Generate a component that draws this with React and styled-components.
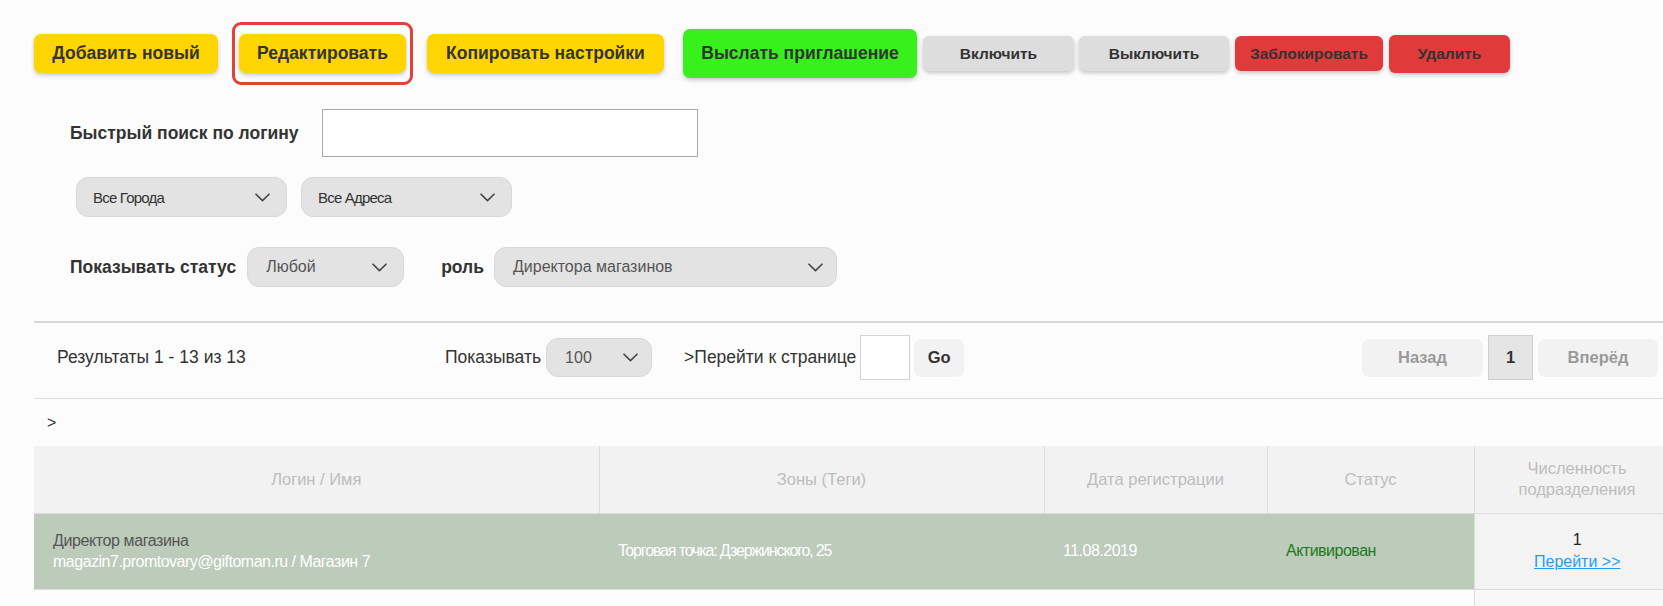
import React from 'react';
import styled, { createGlobalStyle } from 'styled-components';

const Global = createGlobalStyle`
  html, body { margin: 0; padding: 0; background: #fcfcfc; overflow: hidden; }
  body { font-family: "Liberation Sans", Arial, sans-serif; color: #333; }
  * { box-sizing: border-box; }
`;

const Page = styled.div`
  width: 1680px;
  padding: 22px 0 0 34px;
`;

const Toolbar = styled.div`
  display: flex;
  align-items: center;
  height: 63px;
`;

const tones = {
  yellow: '#ffd500',
  green: '#38f01c',
  gray: '#dddddd',
  red: '#e03a3b',
};

const ActionButton = styled.button`
  flex: 0 0 auto;
  width: ${(p) => p.$w}px;
  height: ${(p) => p.$h}px;
  margin-left: ${(p) => p.$gap || 0}px;
  padding: 0;
  border: none;
  border-radius: ${(p) => (p.$big ? 7 : 6)}px;
  background: ${(p) => tones[p.$tone]};
  color: #333;
  font-family: inherit;
  font-weight: bold;
  font-size: ${(p) => (p.$big ? '17.5px' : '15.5px')};
  box-shadow: 0 2px 4px rgba(0, 0, 0, 0.22);
  cursor: pointer;
`;

const Highlight = styled.div`
  display: flex;
  margin-left: 14px;
  padding: 9px 4px;
  border: 3px solid #e3403a;
  border-radius: 9px;
`;

const SearchRow = styled.div`
  display: flex;
  align-items: center;
  gap: 23px;
  margin-top: 24px;
  padding-left: 36px;
`;

const FieldLabel = styled.span`
  font-weight: bold;
  font-size: 17.5px;
  color: #333;
  margin-left: ${(p) => p.$gap || 0}px;
`;

const SearchInput = styled.input`
  width: 376px;
  height: 48px;
  border: 1px solid #a8a8a8;
  background: #fff;
  outline: none;
`;

const FilterRow = styled.div`
  display: flex;
  align-items: center;
  gap: 14px;
  margin-top: 20px;
  padding-left: 42px;
`;

const StatusRow = styled.div`
  display: flex;
  align-items: center;
  margin-top: 30px;
  padding-left: 36px;
`;

const SelectBox = styled.div`
  display: flex;
  align-items: center;
  justify-content: space-between;
  flex: 0 0 auto;
  width: ${(p) => p.$w}px;
  height: ${(p) => p.$h || 40}px;
  margin-left: ${(p) => p.$gap || 0}px;
  padding: 0 ${(p) => p.$pr || 16}px 0 ${(p) => p.$pl || 16}px;
  background: #e3e3e3;
  border: 1px solid #d8d8d8;
  border-radius: 12px;
`;

const SelectText = styled.span`
  font-size: ${(p) => (p.$condensed ? '15px' : '16px')};
  letter-spacing: ${(p) => (p.$condensed ? '-0.8px' : '0')};
  color: ${(p) => (p.$condensed ? '#333' : '#555')};
`;

const Chevron = () => (
  <svg width="15" height="9" viewBox="0 0 15 9" fill="none">
    <path d="M1 1.2 L7.5 7.6 L14 1.2" stroke="#444" strokeWidth="1.6" strokeLinecap="round" strokeLinejoin="round" />
  </svg>
);

const Select = ({ children, condensed, ...rest }) => (
  <SelectBox {...rest}>
    <SelectText $condensed={condensed}>{children}</SelectText>
    <Chevron />
  </SelectBox>
);

const Divider = styled.div`
  margin-top: 34px;
  height: 2px;
  background: #d8d8d8;
`;

const PagerBar = styled.div`
  display: flex;
  align-items: center;
  height: 76px;
  padding: 0 22px 6px 23px;
  border-bottom: 1px solid #dcdcdc;
  font-size: 17.5px;
  color: #333;
`;

const Results = styled.span`
  flex: 0 0 388px;
`;

const PagerText = styled.span`
  margin-left: ${(p) => p.$gap || 0}px;
`;

const PageInput = styled.input`
  width: 50px;
  height: 45px;
  margin-left: 4px;
  border: 1px solid #d4d4d4;
  background: #fff;
  outline: none;
`;

const PagerButton = styled.button`
  flex: 0 0 auto;
  width: ${(p) => p.$w}px;
  height: ${(p) => (p.$current ? 45 : 38)}px;
  margin-left: ${(p) => p.$gap || 0}px;
  padding: 0;
  border: ${(p) => (p.$current ? '1px solid #cfcfcf' : 'none')};
  border-radius: ${(p) => (p.$current ? 0 : 7)}px;
  background: ${(p) => (p.$current ? '#e4e4e4' : '#f2f2f2')};
  color: ${(p) => (p.$muted ? '#9a9a9a' : '#333')};
  font-family: inherit;
  font-weight: bold;
  font-size: 16.5px;
`;

const Spacer = styled.div`
  flex: 1;
`;

const Crumb = styled.div`
  display: flex;
  align-items: center;
  height: 47px;
  padding-left: 13px;
  font-size: 16px;
  color: #333;
`;

const Table = styled.table`
  width: 1646px;
  border-collapse: collapse;
  table-layout: fixed;
`;

const HeadCell = styled.th`
  height: 67px;
  padding: 0 8px;
  background: #f2f2f2;
  border-right: 1px solid #dcdcdc;
  border-bottom: 1px solid #dcdcdc;
  font-weight: normal;
  font-size: 16.5px;
  line-height: 21px;
  color: #bdbdbd;
  text-align: center;
`;

const Cell = styled.td`
  height: ${(p) => (p.$empty ? 30 : 76)}px;
  padding: 0 8px 0 ${(p) => (p.$side ? 8 : 19)}px;
  background: ${(p) => (p.$side ? (p.$empty ? '#f8f8f8' : '#f3f3f3') : p.$empty ? '#fcfcfc' : '#bccbba')};
  border-left: ${(p) => (p.$side ? '1px solid #dcdcdc' : 'none')};
  border-bottom: 1px solid #dcdcdc;
  text-align: ${(p) => (p.$side ? 'center' : 'left')};
  vertical-align: middle;
  font-size: 16px;
  letter-spacing: ${(p) => (p.$tight ? '-1.15px' : '-0.5px')};
  color: #fff;
`;

const RoleLine = styled.div`
  font-size: 16px;
  letter-spacing: -0.4px;
  line-height: 20px;
  color: #555;
`;

const LoginLine = styled.div`
  margin-top: 1px;
  line-height: 20px;
`;

const StatusText = styled.span`
  color: #1c7a1a;
`;

const Count = styled.div`
  line-height: 22px;
  color: #222;
  letter-spacing: 0;
`;

const GoLink = styled.a`
  display: block;
  line-height: 22px;
  color: #1e9ff2;
  text-decoration: underline;
  letter-spacing: 0;
`;

export default function App() {
  return (
    <>
      <Global />
      <Page>
        <Toolbar>
          <ActionButton $tone="yellow" $big $w={184} $h={39}>Добавить новый</ActionButton>
          <Highlight>
            <ActionButton $tone="yellow" $big $w={167} $h={39}>Редактировать</ActionButton>
          </Highlight>
          <ActionButton $tone="yellow" $big $gap={14} $w={237} $h={39}>Копировать настройки</ActionButton>
          <ActionButton $tone="green" $big $gap={19} $w={234} $h={49}>Выслать приглашение</ActionButton>
          <ActionButton $tone="gray" $gap={6} $w={151} $h={35}>Включить</ActionButton>
          <ActionButton $tone="gray" $gap={5} $w={150} $h={35}>Выключить</ActionButton>
          <ActionButton $tone="red" $gap={6} $w={148} $h={35}>Заблокировать</ActionButton>
          <ActionButton $tone="red" $gap={6} $w={121} $h={38}>Удалить</ActionButton>
        </Toolbar>

        <SearchRow>
          <FieldLabel>Быстрый поиск по логину</FieldLabel>
          <SearchInput />
        </SearchRow>

        <FilterRow>
          <Select condensed $w={211}>Все Города</Select>
          <Select condensed $w={211}>Все Адреса</Select>
        </FilterRow>

        <StatusRow>
          <FieldLabel>Показывать статус</FieldLabel>
          <Select $gap={11} $w={157} $pl={18}>Любой</Select>
          <FieldLabel $gap={37}>роль</FieldLabel>
          <Select $gap={10} $w={343} $pl={18} $pr={13}>Директора магазинов</Select>
        </StatusRow>

        <Divider />

        <PagerBar>
          <Results>Результаты 1 - 13 из 13</Results>
          <PagerText>Показывать</PagerText>
          <Select $gap={5} $w={106} $h={39} $pl={18} $pr={13}>100</Select>
          <PagerText $gap={32}>&gt;Перейти к странице</PagerText>
          <PageInput />
          <PagerButton $gap={4} $w={50}>Go</PagerButton>
          <Spacer />
          <PagerButton $muted $w={121}>Назад</PagerButton>
          <PagerButton $current $gap={5} $w={45}>1</PagerButton>
          <PagerButton $muted $gap={5} $w={120}>Вперёд</PagerButton>
        </PagerBar>

        <Crumb>&gt;</Crumb>

        <Table>
          <colgroup>
            <col style={{ width: 565 }} />
            <col style={{ width: 445 }} />
            <col style={{ width: 223 }} />
            <col style={{ width: 207 }} />
            <col style={{ width: 206 }} />
          </colgroup>
          <thead>
            <tr>
              <HeadCell>Логин / Имя</HeadCell>
              <HeadCell>Зоны (Теги)</HeadCell>
              <HeadCell>Дата регистрации</HeadCell>
              <HeadCell>Статус</HeadCell>
              <HeadCell>Численность<br />подразделения</HeadCell>
            </tr>
          </thead>
          <tbody>
            <tr>
              <Cell>
                <RoleLine>Директор магазина</RoleLine>
                <LoginLine>magazin7.promtovary@giftoman.ru / Магазин 7</LoginLine>
              </Cell>
              <Cell $tight>Торговая точка: Дзержинского, 25</Cell>
              <Cell>11.08.2019</Cell>
              <Cell><StatusText>Активирован</StatusText></Cell>
              <Cell $side>
                <Count>1</Count>
                <GoLink href="#">Перейти &gt;&gt;</GoLink>
              </Cell>
            </tr>
            <tr>
              <Cell $empty />
              <Cell $empty />
              <Cell $empty />
              <Cell $empty />
              <Cell $empty $side />
            </tr>
          </tbody>
        </Table>
      </Page>
    </>
  );
}
